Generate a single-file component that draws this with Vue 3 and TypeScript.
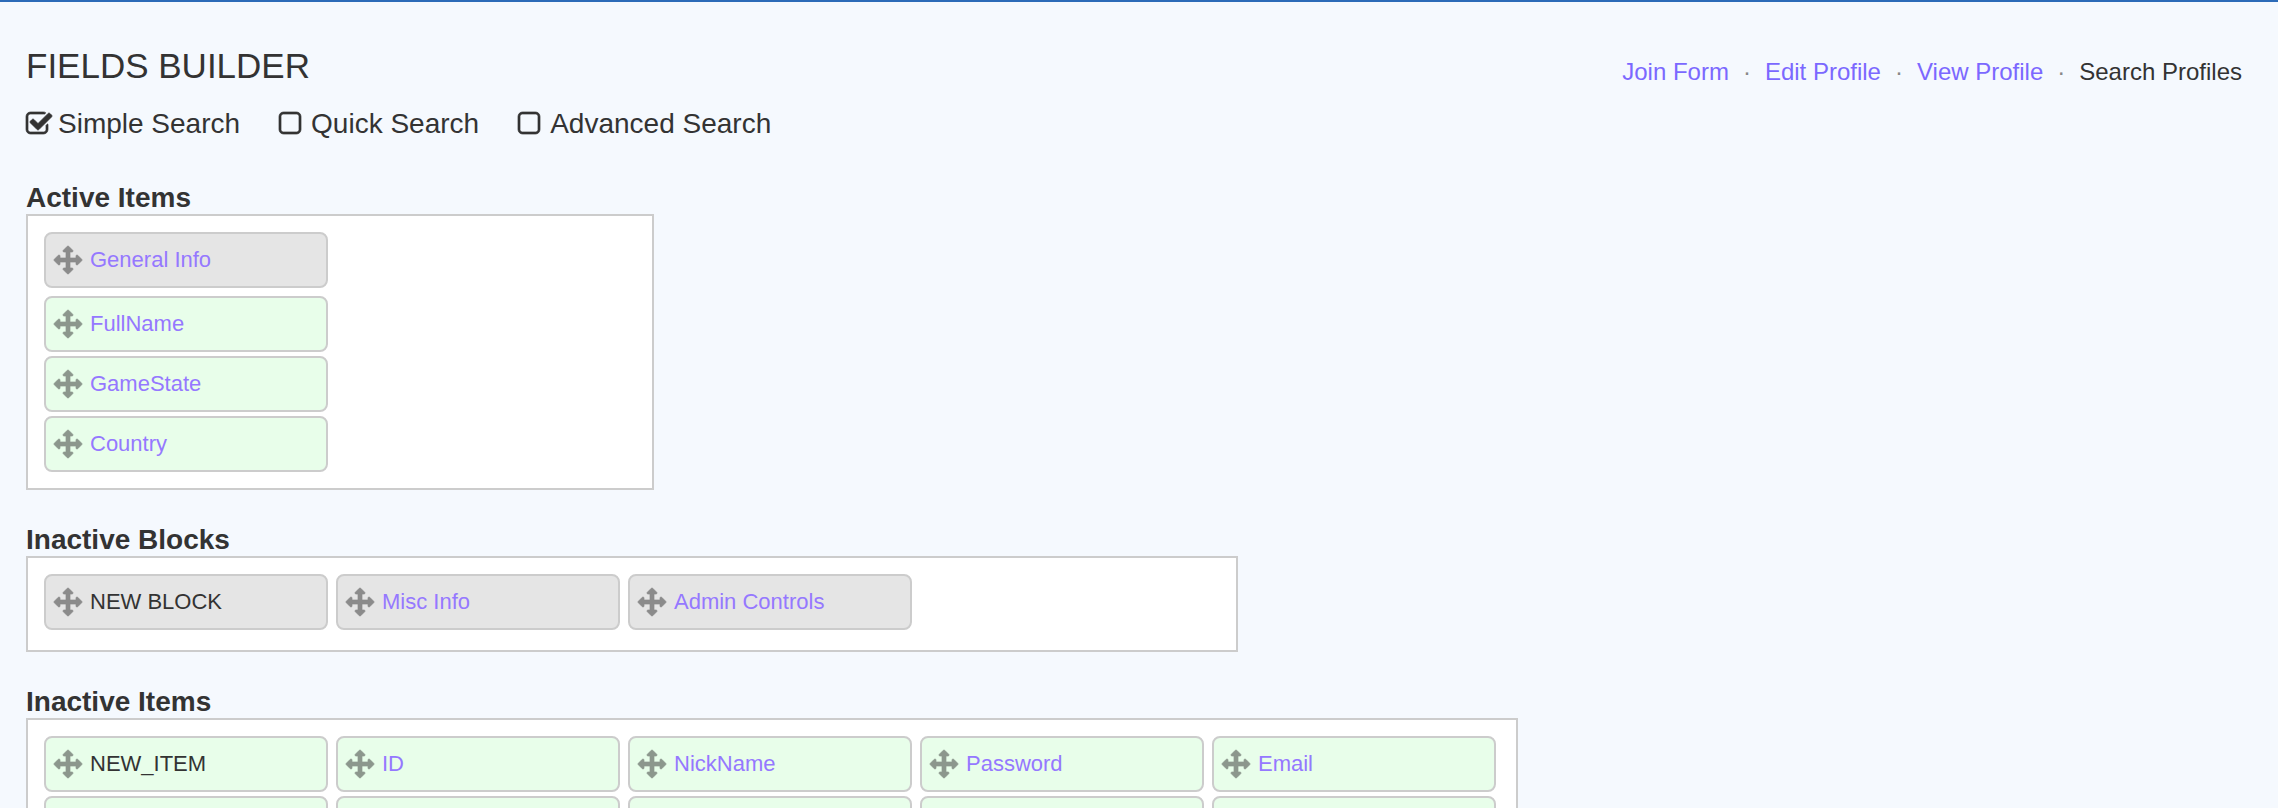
<script setup lang="ts">
import { ref } from 'vue'

interface Field {
  id: number
  name: string
  kind: 'block' | 'item'
  fresh?: boolean
}

interface Section {
  title: string
  size: string
  fields: Field[]
}

let nextId = 0
const block = (name: string, fresh = false): Field => ({ id: nextId++, name, kind: 'block', fresh })
const item = (name: string, fresh = false): Field => ({ id: nextId++, name, kind: 'item', fresh })

const pages = ['Join Form', 'Edit Profile', 'View Profile', 'Search Profiles']
const currentPage = 'Search Profiles'

const modes = ref([
  { label: 'Simple Search', on: true },
  { label: 'Quick Search', on: false },
  { label: 'Advanced Search', on: false },
])

const sections: Section[] = [
  {
    title: 'Active Items',
    size: 'narrow',
    fields: [block('General Info'), item('FullName'), item('GameState'), item('Country')],
  },
  {
    title: 'Inactive Blocks',
    size: 'medium',
    fields: [block('NEW BLOCK', true), block('Misc Info'), block('Admin Controls')],
  },
  {
    title: 'Inactive Items',
    size: 'wide',
    fields: [
      item('NEW_ITEM', true),
      item('ID'),
      item('NickName'),
      item('Password'),
      item('Email'),
      ...Array.from({ length: 5 }, () => item('')),
    ],
  },
]
</script>

<template>
  <div class="page">
    <header class="top">
      <h1>FIELDS BUILDER</h1>
      <nav class="pages">
        <template v-for="(page, i) in pages" :key="page">
          <span v-if="i > 0" class="dot">·</span>
          <span v-if="page === currentPage">{{ page }}</span>
          <a v-else href="#">{{ page }}</a>
        </template>
      </nav>
    </header>

    <div class="modes">
      <label v-for="mode in modes" :key="mode.label" class="mode">
        <span class="tick">
          <input v-model="mode.on" type="checkbox" />
          <svg v-if="mode.on" width="26" height="28" viewBox="64 0 1664 1792" aria-hidden="true">
            <path
              d="M1472 930v318q0 119-84.5 203.5t-203.5 84.5h-832q-119 0-203.5-84.5t-84.5-203.5v-832q0-119 84.5-203.5t203.5-84.5h832q63 0 117 25 15 7 18 23 3 17-9 29l-49 49q-10 10-23 10-3 0-9-2-23-6-45-6h-832q-66 0-113 47t-47 113v832q0 66 47 113t113 47h832q66 0 113-47t47-113v-254q0-13 9-22l64-64q10-10 23-10 6 0 12 3 20 8 20 29zm231-489l-814 814q-24 24-57 24t-57-24l-430-430q-24-24-24-57t24-57l110-110q24-24 57-24t57 24l263 263 647-647q24-24 57-24t57 24l110 110q24 24 24 57t-24 57z"
            />
          </svg>
          <svg v-else width="26" height="28" viewBox="192 0 1664 1792" aria-hidden="true">
            <path
              d="M1312 256h-832q-66 0-113 47t-47 113v832q0 66 47 113t113 47h832q66 0 113-47t47-113v-832q0-66-47-113t-113-47zm288 160v832q0 119-84.5 203.5t-203.5 84.5h-832q-119 0-203.5-84.5t-84.5-203.5v-832q0-119 84.5-203.5t203.5-84.5h832q119 0 203.5 84.5t84.5 203.5z"
            />
          </svg>
        </span>
        <span>{{ mode.label }}</span>
      </label>
    </div>

    <section v-for="section in sections" :key="section.title">
      <h2>{{ section.title }}</h2>
      <ul class="area" :class="section.size">
        <li v-for="field in section.fields" :key="field.id" class="field" :class="field.kind">
          <svg class="move" width="28" height="28" viewBox="0 0 1792 1792" aria-hidden="true">
            <path
              d="M1792 896q0 26-19 45l-256 256q-19 19-45 19t-45-19-19-45v-128h-384v384h128q26 0 45 19t19 45-19 45l-256 256q-19 19-45 19t-45-19l-256-256q-19-19-19-45t19-45 45-19h128v-384h-384v128q0 26-19 45t-45 19-45-19l-256-256q-19-19-19-45t19-45l256-256q19-19 45-19t45 19 19 45v128h384v-384h-128q-26 0-45-19t-19-45 19-45l256-256q19-19 45-19t45 19l256 256q19 19 19 45t-19 45-45 19h-128v384h384v-128q0-26 19-45t45-19 45 19l256 256q19 19 19 45z"
            />
          </svg>
          <span v-if="field.fresh">{{ field.name }}</span>
          <a v-else-if="field.name" href="#">{{ field.name }}</a>
        </li>
      </ul>
    </section>
  </div>
</template>

<style>
body {
  background: #f5f9fe;
}
</style>

<style scoped>
.page {
  box-sizing: border-box;
  height: 100vh;
  overflow: hidden;
  padding: 40px 36px 0 26px;
  border-top: 2px solid #2c6bb8;
  color: #333;
  font-family: 'Liberation Sans', Arial, sans-serif;
}

a {
  color: #7b68ff;
  text-decoration: none;
}

svg {
  display: block;
  flex: none;
  overflow: visible;
  fill: currentColor;
  stroke: currentColor;
  stroke-width: 44;
}

.top {
  display: flex;
  justify-content: space-between;
  align-items: flex-end;
}

h1 {
  margin: 0;
  font-size: 35px;
  font-weight: 400;
  line-height: 48px;
}

.pages {
  display: flex;
  gap: 14px;
  font-size: 24px;
  line-height: 36px;
}

.dot {
  color: #888;
}

.modes {
  display: flex;
  flex-wrap: wrap;
  gap: 39px;
  margin-top: 16px;
  font-size: 28px;
  line-height: 36px;
}

.mode {
  display: flex;
  align-items: center;
  gap: 6px;
}

.tick {
  display: grid;
}

.tick > * {
  grid-area: 1 / 1;
}

.tick input {
  width: 100%;
  height: 100%;
  margin: 0;
  appearance: none;
}

h2 {
  margin: 34px 0 0;
  font-size: 28px;
  font-weight: 700;
  line-height: 32px;
}

.modes + section h2 {
  margin-top: 40px;
}

.area {
  display: flex;
  flex-wrap: wrap;
  gap: 4px 8px;
  box-sizing: border-box;
  margin: 0;
  padding: 16px;
  border: 2px solid #ccc;
  background: #fff;
  list-style: none;
}

.narrow {
  flex-direction: column;
  max-width: 628px;
}

.narrow .block {
  margin-bottom: 4px;
}

.medium {
  max-width: 1212px;
  padding-bottom: 20px;
}

.wide {
  max-width: 1492px;
}

.field {
  display: flex;
  align-items: center;
  gap: 8px;
  box-sizing: border-box;
  width: 284px;
  height: 56px;
  padding: 0 8px;
  border: 2px solid #ccc;
  border-radius: 8px;
  font-size: 22px;
  line-height: 32px;
}

.field a {
  color: #9578ff;
}

.block {
  background: #e5e5e5;
}

.item {
  background: #e8feea;
}

.move {
  opacity: 0.5;
}
</style>
